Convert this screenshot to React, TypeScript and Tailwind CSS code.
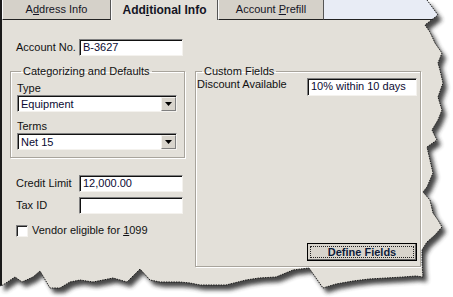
import React from 'react';

// torn paper outline (right and bottom edges only)
const tornEdge: [number, number][] = [
  [427, 0], [438, 15], [425, 25], [430, 32], [435, 43], [442, 53], [438, 63], [440, 70],
  [443, 83], [438, 97], [442, 110], [438, 120], [432, 130], [437, 140], [427, 147],
  [430, 160], [433, 173], [427, 187], [423, 192], [430, 200], [433, 213], [438, 220],
  [442, 227], [435, 235], [427, 242], [422, 250], [422, 263], [423, 277], [416, 276],
  [403, 277], [386, 278], [369, 279], [353, 281], [336, 284], [323, 288], [309, 268],
  [293, 270], [276, 277], [259, 278], [246, 280], [226, 285], [200, 285], [190, 283],
  [180, 282], [160, 282], [150, 280], [140, 269], [127, 282], [113, 278], [93, 282],
  [80, 280], [70, 282], [60, 288], [50, 288], [40, 271], [33, 277], [22, 282], [15, 277],
  [3, 285], [0, 286],
];

const edgePts = tornEdge.map(([x, y]) => `${x},${y}`).join(' ');
const paperPath = `M0,0 L${tornEdge.map(([x, y]) => `${x},${y}`).join(' L')} Z`;

function TornOverlay() {
  return (
    <svg className="absolute inset-0 pointer-events-none" width="453" height="297" viewBox="0 0 453 297">
      <defs>
        <filter id="blur" x="-10%" y="-10%" width="120%" height="120%">
          <feGaussianBlur stdDeviation="2.2" />
        </filter>
        <mask id="outside">
          <rect width="453" height="297" fill="#fff" />
          <path d={paperPath} fill="#000" />
        </mask>
      </defs>
      <g mask="url(#outside)">
        <rect width="453" height="297" fill="#fff" />
        <path d={paperPath} transform="translate(4,5)" fill="#333" opacity="0.9" filter="url(#blur)" />
      </g>
      <polyline points={edgePts} fill="none" stroke="#1a1a1a" strokeWidth="1" strokeDasharray="1.5 1" />
    </svg>
  );
}

function TextBox({ value, className }: { value?: string; className?: string }) {
  return (
    <div
      className={`h-[17px] bg-white border border-t-[#808080] border-l-[#808080] border-r-[#f4f2ee] border-b-[#f4f2ee] shadow-[inset_1px_1px_0_#111] pl-[3px] text-[11px] leading-[15px] text-[#0b0b33] ${className ?? ''}`}
    >
      {value}
    </div>
  );
}

function Combo({ value }: { value: string }) {
  return (
    <div className="flex h-[17px] w-[160px] bg-white border border-t-[#808080] border-l-[#808080] border-r-[#f4f2ee] border-b-[#f4f2ee] shadow-[inset_1px_1px_0_#111]">
      <span className="flex-1 pl-[3px] pt-[1px] text-[11px] leading-[14px] text-[#0b0b33]">{value}</span>
      <span className="mt-[1px] w-[15px] bg-[#d8d4cc] border border-t-[#f4f2ee] border-l-[#f4f2ee] border-r-[#808080] border-b-[#808080] flex items-center justify-center">
        <svg width="7" height="4" viewBox="0 0 7 4">
          <path d="M0 0H7L3.5 4Z" fill="#000" />
        </svg>
      </span>
    </div>
  );
}

function Tab({ label, active, className }: { label: React.ReactNode; active?: boolean; className: string }) {
  return (
    <div
      className={`h-[20px] flex items-center justify-center border-l border-l-[#fafafa] border-r border-r-[#555] text-[11px] text-[#151525] ${
        active ? 'bg-[#e3e0d9] font-bold text-[12px]' : 'bg-[#d5d1c9] border-b border-b-[#222]'
      } ${className}`}
    >
      {label}
    </div>
  );
}

export default function App() {
  return (
    <div className="relative w-[453px] h-[297px] bg-white overflow-hidden font-['Liberation_Sans',Arial,sans-serif] text-[11px] text-[#111]">
      <div className="flex flex-col w-[453px] h-[297px] bg-[#e3e0d9] border-l-2 border-l-[#1a1a1a]">
        {/* tabs */}
        <div className="flex h-[20px]">
          <Tab className="w-[109px]" label={<span>A<u>d</u>dress Info</span>} />
          <Tab className="w-[107px]" active label={<span>Add<u>i</u>tional Info</span>} />
          <Tab className="w-[106px]" label={<span>Account <u>P</u>refill</span>} />
          <div className="flex-1 h-[20px] bg-[#e8ecf5] border-b border-b-[#222]" />
        </div>

        {/* body */}
        <div className="flex pl-[8px]">
          <div className="flex flex-col w-[175px]">
            <div className="flex items-center mt-[19px] h-[16px]">
              <span className="ml-[6px] w-[63px] leading-[13px]">Account No.</span>
              <TextBox className="w-[104px]" value="B-3627" />
            </div>

            <fieldset className="mt-[10px] h-[93px] border border-[#a8a49c] shadow-[inset_1px_1px_0_#fff,1px_1px_0_#fff] pl-[6px] pr-[6px]">
              <legend className="ml-[4px] px-[2px] leading-[13px]">Categorizing and Defaults</legend>
              <div className="mt-[4px] leading-[13px]">Type</div>
              <Combo value="Equipment" />
              <div className="mt-[8px] leading-[13px]">Terms</div>
              <Combo value="Net 15" />
            </fieldset>

            <div className="flex items-center mt-[17px] h-[17px]">
              <span className="ml-[6px] w-[63px] leading-[13px]">Credit Limit</span>
              <TextBox className="w-[104px]" value="12,000.00" />
            </div>
            <div className="flex items-center mt-[5px] h-[17px]">
              <span className="ml-[6px] w-[63px] leading-[13px]">Tax ID</span>
              <TextBox className="w-[104px]" />
            </div>
            <div className="flex items-center mt-[10px] ml-[6px] gap-[4px]">
              <span className="w-[12px] h-[12px] bg-white border border-t-[#808080] border-l-[#808080] border-r-[#f4f2ee] border-b-[#f4f2ee] shadow-[inset_1px_1px_0_#222]" />
              <span className="leading-[13px]">
                Vendor eligible for <u>1</u>099
              </span>
            </div>
          </div>

          <fieldset className="ml-[10px] mt-[45px] w-[226px] h-[202px] flex flex-col border border-[#a8a49c] shadow-[inset_1px_1px_0_#fff,1px_1px_0_#fff] pl-[1px] pr-[3px] pb-[5px]">
            <legend className="ml-[5px] px-[2px] leading-[13px]">Custom Fields</legend>
            <div className="flex items-start">
              <span className="leading-[13px]">Discount Available</span>
              <TextBox className="ml-auto w-[110px] h-[18px]" value="10% within 10 days" />
            </div>
            <div className="mt-auto self-end w-[110px] h-[18px] border border-black bg-[#d8d4cc] p-[2px] shadow-[inset_-1px_-1px_0_#666]">
              <div className="h-full border border-dotted border-[#222] flex items-center justify-center font-bold text-[11px] text-[#0d1b3a] leading-[12px]">
                Define Fields
              </div>
            </div>
          </fieldset>
        </div>
      </div>
      <TornOverlay />
    </div>
  );
}
